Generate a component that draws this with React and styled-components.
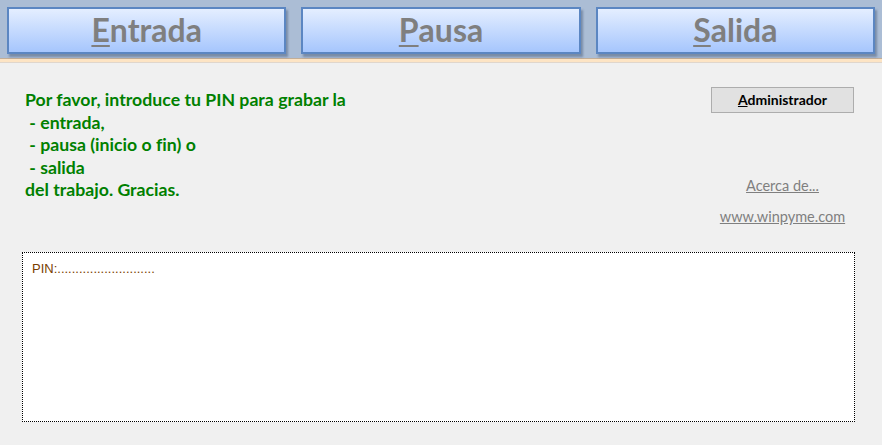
import styled, { createGlobalStyle } from "styled-components";

const Global = createGlobalStyle`
body {
    margin: 0;
    background: #f0f0f0;
    font-family: Lato, "Liberation Sans", sans-serif;
    font-variant-ligatures: none;
}
`

const Page = styled.div`
width: 882px;
height: 445px;
background: #f0f0f0;
overflow: hidden;
`

const Header = styled.div`
display: flex;
gap: 15px;
height: 59px;
padding: 7px 7px 0 7px;
box-sizing: border-box;
background: #abbdd5;
border-bottom: 1px solid #c2ae98;
`

const Stripe = styled.div`
height: 3px;
background: #fde4c4;
border-bottom: 1px solid #e0d6cc;
`

const BigButton = styled.button`
flex: 1;
height: 47px;
display: flex;
justify-content: center;
align-items: center;
background: linear-gradient(#e4eeff, #a6c6fd);
border: 2px solid #5b86c2;
box-shadow: 2px 3px 2px rgba(60, 80, 110, 0.45);
color: #7f7f7f;
font-family: Lato, "Liberation Sans", sans-serif;
font-variant-ligatures: none;
font-weight: 700;
font-size: 32px;
padding: 0 0 3px 0;
cursor: pointer;
u {
    text-decoration-thickness: 2px;
    text-underline-offset: 3px;
}
`

const Body = styled.div`
display: flex;
justify-content: space-between;
padding: 25px 28px 0 25px;
height: 189px;
box-sizing: border-box;
`

const Message = styled.div`
color: #008000;
font-weight: 700;
font-size: 17.7px;
line-height: 22.5px;
white-space: pre;
margin-top: 1px;
`

const Side = styled.div`
display: flex;
flex-direction: column;
align-items: center;
`

const AdminButton = styled.button`
width: 143px;
height: 26px;
background: #e1e1e1;
border: 1px solid #adadad;
font-family: Lato, "Liberation Sans", sans-serif;
font-weight: 700;
font-size: 14px;
color: #000;
margin-top: -1px;
margin-bottom: 64px;
padding: 0 0 2px 0;
`

const Link = styled.a`
color: #7f7f7f;
font-size: 14.5px;
text-decoration: underline;
margin-bottom: 14px;
`

const PinBox = styled.div`
margin: 0 27px 0 22px;
height: 170px;
background: #fff;
border: 1px dotted #000;
padding: 8px 9px;
box-sizing: border-box;
font-family: "Liberation Sans", Arial, sans-serif;
font-size: 13px;
color: #7a3e00;
`

export default function App() {
    return (
        <Page>
            <Global />
            <Header>
                <BigButton><u>E</u>ntrada</BigButton>
                <BigButton><u>P</u>ausa</BigButton>
                <BigButton><u>S</u>alida</BigButton>
            </Header>
            <Stripe />
            <Body>
                <Message>{"Por favor, introduce tu PIN para grabar la\n - entrada,\n - pausa (inicio o fin) o\n - salida\ndel trabajo. Gracias."}</Message>
                <Side>
                    <AdminButton><u>A</u>dministrador</AdminButton>
                    <Link>Acerca de...</Link>
                    <Link>www.winpyme.com</Link>
                </Side>
            </Body>
            <PinBox>PIN:...........................</PinBox>
        </Page>
    )
}
